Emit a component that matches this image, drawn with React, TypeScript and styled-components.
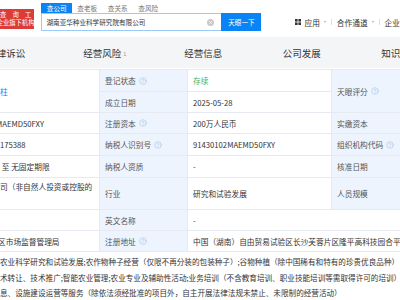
import React from "react";
import styled, { createGlobalStyle } from "styled-components";
import { CircleHelp } from "lucide-react";

const GlobalStyle = createGlobalStyle`
  html, body {
    margin: 0;
    padding: 0;
    background: #fff;
  }
  body {
    width: 400px;
    height: 300px;
    overflow: hidden;
    font-family: "Noto Sans CJK SC", "Noto Sans", sans-serif;
    color: #333;
  }
`;

type CellPos = {
  $row: number;
  $col: number;
  $rowSpan?: number;
  $colSpan?: number;
};

const App: React.FC = () => {
  return (
    <>
      <GlobalStyle />
      <Page>
        <Header>
          <Logo>
            <LogoTop>查 询 工 具</LogoTop>
            <LogoBottom>
              <span>查企业旗下机构</span>
            </LogoBottom>
          </Logo>
          <SearchArea>
            <SearchTabs>
              <SearchTab $active>查公司</SearchTab>
              <SearchTab>查老板</SearchTab>
              <SearchTab>查关系</SearchTab>
              <SearchTab>查风险</SearchTab>
            </SearchTabs>
            <SearchRow>
              <SearchInput>
                <span>湖南亚华种业科学研究院有限公司</span>
                <svg width="7" height="7" viewBox="0 0 10 10">
                  <circle cx="5" cy="5" r="5" fill="#c9c9c9" />
                  <path d="M3.3 3.3 L6.7 6.7 M6.7 3.3 L3.3 6.7" stroke="#fff" strokeWidth="1.2" />
                </svg>
              </SearchInput>
              <SearchButton>天眼一下</SearchButton>
            </SearchRow>
          </SearchArea>
          <Nav>
            <svg width="6" height="6" viewBox="0 0 6 6">
              <rect x="0" y="0" width="2.6" height="2.6" fill="#333" />
              <rect x="3.4" y="0" width="2.6" height="2.6" fill="#333" />
              <rect x="0" y="3.4" width="2.6" height="2.6" fill="#333" />
              <rect x="3.4" y="3.4" width="2.6" height="2.6" fill="#333" />
            </svg>
            <NavItem>应用</NavItem>
            <Caret />
            <NavDivider />
            <NavItem>合作通道</NavItem>
            <Caret />
            <NavDivider />
            <NavItem>企业</NavItem>
          </Nav>
        </Header>

        <TabBar>
          <Tab>法律诉讼</Tab>
          <Tab>
            经营风险<TabCount>1</TabCount>
          </Tab>
          <Tab>经营信息</Tab>
          <Tab>公司发展</Tab>
          <Tab>知识产权</Tab>
        </TabBar>

        <InfoGrid>
          <Value $row={1} $col={1} $rowSpan={2} $edge>
            <LinkText>柱</LinkText>
          </Value>
          <Label $row={1} $col={2}>
            登记状态 <Help />
          </Label>
          <Value $row={1} $col={3}>
            <StatusText>存续</StatusText>
          </Value>
          <Label $row={1} $col={4} $rowSpan={2}>
            天眼评分 <Help />
          </Label>
          <Value $row={1} $col={5} $rowSpan={2} />

          <Label $row={2} $col={2}>成立日期</Label>
          <Value $row={2} $col={3}>2025-05-28</Value>

          <Value $row={3} $col={1} $edge>
            <Cut $by={4}>MAEMD50FXY</Cut>
          </Value>
          <Label $row={3} $col={2}>
            注册资本 <Help />
          </Label>
          <Value $row={3} $col={3}>200万人民币</Value>
          <Label $row={3} $col={4}>实缴资本</Label>
          <Value $row={3} $col={5} />

          <Value $row={4} $col={1} $edge>175388</Value>
          <Label $row={4} $col={2}>
            纳税人识别号 <Help />
          </Label>
          <Value $row={4} $col={3}>91430102MAEMD50FXY</Value>
          <Label $row={4} $col={4}>
            组织机构代码 <Help />
          </Label>
          <Value $row={4} $col={5} />

          <Value $row={5} $col={1} $edge>
            &nbsp;至 无固定期限
          </Value>
          <Label $row={5} $col={2}>纳税人资质</Label>
          <Value $row={5} $col={3}>-</Value>
          <Label $row={5} $col={4}>核准日期</Label>
          <Value $row={5} $col={5} />

          <Value $row={6} $col={1} $edge $top>
            司（非自然人投资或控股的
          </Value>
          <Label $row={6} $col={2}>行业</Label>
          <Value $row={6} $col={3}>研究和试验发展</Value>
          <Label $row={6} $col={4}>人员规模</Label>
          <Value $row={6} $col={5} />

          <Value $row={7} $col={1} $edge />
          <Label $row={7} $col={2}>英文名称</Label>
          <Value $row={7} $col={3} $colSpan={3}>-</Value>

          <Value $row={8} $col={1} $edge>
            <Cut $by={2}>区市场监督管理局</Cut>
          </Value>
          <Label $row={8} $col={2}>
            注册地址 <Help />
          </Label>
          <Value $row={8} $col={3} $colSpan={3}>
            中国（湖南）自由贸易试验区长沙芙蓉片区隆平高科技园合平路
          </Value>

          <Scope $row={9} $col={1} $colSpan={5}>
            <ScopeLine>农业科学研究和试验发展;农作物种子经营（仅限不再分装的包装种子）;谷物种植（除中国稀有和特有的珍贵优良品种）</ScopeLine>
            <ScopeLine>术转让、技术推广;智能农业管理;农业专业及辅助性活动;业务培训（不含教育培训、职业技能培训等需取得许可的培训）</ScopeLine>
            <ScopeLine>息、设施建设运营等服务（除依法须经批准的项目外，自主开展法律法规未禁止、未限制的经营活动）</ScopeLine>
          </Scope>
        </InfoGrid>
      </Page>
    </>
  );
};

const Help = () => <HelpIcon size={8} strokeWidth={1.6} />;

const Page = styled.div`
  width: 400px;
  height: 300px;
  overflow: hidden;
  background: #fff;
`;

const Header = styled.div`
  height: 37px;
  display: flex;
  align-items: flex-start;
  background: #fff;
`;

const Logo = styled.div`
  margin-top: 9px;
  width: 38px;
  height: 20px;
  background: #dc3b38;
  color: #fff;
  display: flex;
  flex-direction: column;
  justify-content: center;
  overflow: hidden;
  font-size: 6.3px;
  line-height: 8px;
`;

const LogoTop = styled.div`
  letter-spacing: 2.4px;
  white-space: nowrap;
`;

const LogoBottom = styled.div`
  display: flex;
  justify-content: flex-end;
  white-space: nowrap;
`;

const SearchArea = styled.div`
  margin-left: 7px;
  margin-top: 3px;
  display: flex;
  flex-direction: column;
`;

const SearchTabs = styled.div`
  display: flex;
  height: 10px;
`;

const SearchTab = styled.div<{ $active?: boolean }>`
  width: 30.5px;
  text-align: center;
  font-size: 6.6px;
  line-height: 10px;
  color: ${({ $active }) => ($active ? "#fff" : "#777")};
  background: ${({ $active }) => ($active ? "#0a84f5" : "transparent")};
`;

const SearchRow = styled.div`
  display: flex;
  height: 18px;
`;

const SearchInput = styled.div`
  box-sizing: border-box;
  width: 180px;
  height: 18px;
  border: 1px solid #9ccaf7;
  border-right: none;
  display: flex;
  align-items: center;
  justify-content: space-between;
  padding: 0 7px 0 4px;
  font-size: 6.6px;
  color: #333;
  white-space: nowrap;
`;

const SearchButton = styled.div`
  width: 40px;
  height: 18px;
  background: #0a84f5;
  color: #fff;
  font-size: 6.6px;
  display: flex;
  align-items: center;
  justify-content: center;
`;

const Nav = styled.div`
  margin-left: 34px;
  margin-top: 17px;
  height: 10px;
  display: flex;
  align-items: center;
  gap: 3px;
  white-space: nowrap;
`;

const NavItem = styled.span`
  font-size: 7.7px;
  color: #333;
`;

const Caret = styled.span`
  width: 0;
  height: 0;
  border-left: 1.6px solid transparent;
  border-right: 1.6px solid transparent;
  border-top: 2px solid #aaa;
  margin-left: 1px;
`;

const NavDivider = styled.span`
  width: 1px;
  height: 6px;
  background: #ddd;
  margin: 0 2px;
`;

const TabBar = styled.div`
  height: 31px;
  background: #f4f5f7;
  display: flex;
  margin-left: -43px;
  width: 520px;
`;

const Tab = styled.div`
  width: 98.5px;
  flex-shrink: 0;
  display: flex;
  align-items: center;
  justify-content: center;
  font-size: 9.5px;
  color: #333;
  white-space: nowrap;
`;

const TabCount = styled.span`
  font-size: 5.5px;
  color: #999;
  margin-left: 2px;
  margin-top: 2px;
`;

const InfoGrid = styled.div`
  margin-top: 1px;
  padding-top: 1px;
  display: grid;
  grid-template-columns: 99px 87px 143px 100px 200px;
  grid-template-rows: 21px 20px 20px 21px 21px 31px 20px 20px auto;
  gap: 1px;
  background: #e6eaf0;
  width: 634px;
  font-size: 7.7px;
`;

const CellBase = styled.div<CellPos>`
  grid-row: ${({ $row, $rowSpan }) => `${$row} / span ${$rowSpan ?? 1}`};
  grid-column: ${({ $col, $colSpan }) => `${$col} / span ${$colSpan ?? 1}`};
  display: flex;
  align-items: center;
  white-space: nowrap;
  overflow: hidden;
`;

const Label = styled(CellBase)`
  background: #edf4fd;
  color: #555;
  padding: 0 5px;
  gap: 3px;
`;

const Value = styled(CellBase)<{ $edge?: boolean; $top?: boolean }>`
  background: #fff;
  color: #333;
  padding: ${({ $edge, $top }) => `${$top ? "1px" : "0"} 5px 0 ${$edge ? "0" : "5px"}`};
  align-items: ${({ $top }) => ($top ? "flex-start" : "center")};
  line-height: 15px;
`;

const Scope = styled(CellBase)`
  background: #fff;
  color: #333;
  flex-direction: column;
  align-items: flex-start;
  padding-top: 2px;
  min-height: 60px;
`;

const ScopeLine = styled.div`
  line-height: 15.5px;
  font-size: 7.6px;
  white-space: nowrap;
`;

const Cut = styled.span<{ $by: number }>`
  margin-left: ${({ $by }) => -$by}px;
`;

const LinkText = styled.span`
  color: #0084ff;
`;

const StatusText = styled.span`
  color: #3db36b;
`;

const HelpIcon = styled(CircleHelp)`
  color: #9dbde6;
  flex-shrink: 0;
`;

export default App;
